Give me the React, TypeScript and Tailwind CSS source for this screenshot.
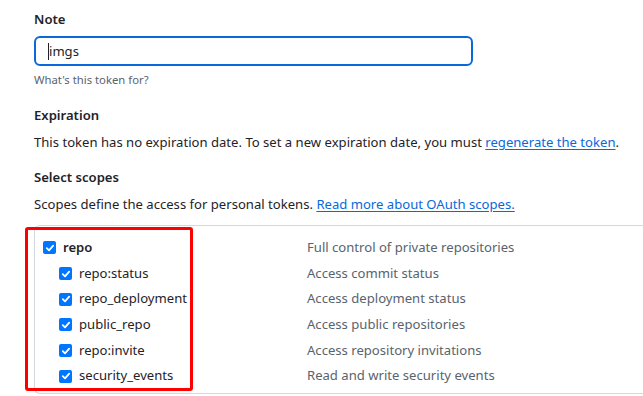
import React from "react";

type Scope = {
  name: string;
  description: string;
  parent?: boolean;
};

const scopes: Scope[] = [
  { name: "repo", description: "Full control of private repositories", parent: true },
  { name: "repo:status", description: "Access commit status" },
  { name: "repo_deployment", description: "Access deployment status" },
  { name: "public_repo", description: "Access public repositories" },
  { name: "repo:invite", description: "Access repository invitations" },
  { name: "security_events", description: "Read and write security events" },
];

const CheckBox = () => (
  <span className="flex h-[13px] w-[13px] shrink-0 items-center justify-center rounded-[2px] bg-[#0075ff]">
    <svg width="10" height="10" viewBox="0 0 10 10" fill="none">
      <path
        d="M1.8 5.2 L4 7.3 L8.2 2.6"
        stroke="white"
        strokeWidth="1.8"
        strokeLinecap="round"
        strokeLinejoin="round"
      />
    </svg>
  </span>
);

export default function App() {
  return (
    <div
      className="h-[396px] w-[643px] overflow-hidden bg-white pl-[34px] pt-[9px] text-[13.1px] text-[#1f2328]"
      style={{ fontFamily: '"Noto Sans", "Open Sans", sans-serif' }}
    >
      {/* Note */}
      <p className="leading-[21px] font-semibold">Note</p>
      <div className="mt-[6px] flex h-[30px] w-[439px] items-center rounded-[6px] border-2 border-[#0969da] pl-[12px]">
        <span className="h-[17px] w-px bg-[#1f2328]" />
        <span className="leading-[20px]">imgs</span>
      </div>
      <p className="mt-[5px] text-[11.3px] leading-[18px] text-[#59636e]">
        What's this token for?
      </p>

      {/* Expiration */}
      <p className="mt-[16px] leading-[21px] font-semibold">Expiration</p>
      <p className="mt-[6px] leading-[21px]">
        This token has no expiration date. To set a new expiration date, you must{" "}
        <a className="text-[#0969da] underline underline-offset-2">regenerate the token</a>.
      </p>

      {/* Scopes */}
      <p className="mt-[14px] leading-[21px] font-semibold">Select scopes</p>
      <p className="mt-[6px] leading-[21px]">
        Scopes define the access for personal tokens.{" "}
        <a className="text-[#0969da] underline underline-offset-2">
          Read more about OAuth scopes.
        </a>
      </p>

      <div className="relative mt-[10px]">
        <div className="w-[700px] rounded-l-[6px] border border-r-0 border-[#d1d9e0] pb-[4px] pt-[9px]">
          {scopes.map((s) => (
            <div key={s.name} className="flex h-[25.7px] items-center">
              <div
                className={`flex w-[272px] items-center gap-[7px] ${
                  s.parent ? "pl-[8px]" : "pl-[24px]"
                }`}
              >
                <CheckBox />
                <span className={s.parent ? "font-semibold" : ""}>{s.name}</span>
              </div>
              <span className="text-[#59636e]">{s.description}</span>
            </div>
          ))}
        </div>
        {/* highlight box */}
        <div className="absolute left-[-9px] top-[2px] h-[164px] w-[168px] rounded-[3px] border-[3px] border-[#ff0000]" />
      </div>
    </div>
  );
}
